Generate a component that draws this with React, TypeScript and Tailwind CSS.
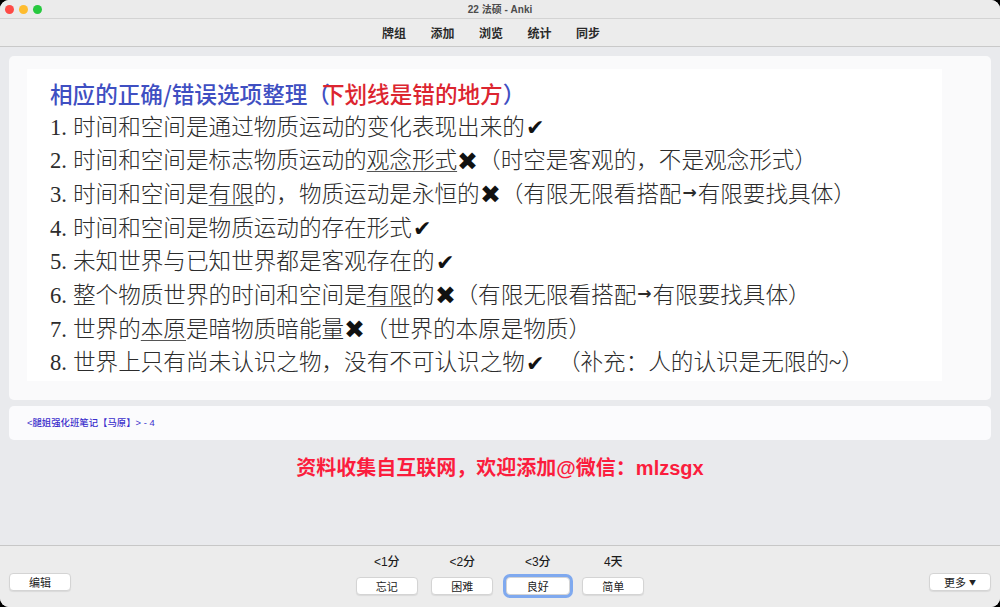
import React from "react";

const CJK = '"Noto Sans CJK SC", "Noto Sans", sans-serif';
const LAT_CJK = '"Liberation Sans", "Noto Sans CJK SC", sans-serif';
const BODY = '"Liberation Serif", "Noto Sans CJK SC", serif';

const Check = () => (
  <span className="text-[#111] text-[22px] ml-[1px]" style={{ fontFamily: '"DejaVu Sans", sans-serif' }}>
    ✔
  </span>
);
const Cross = () => (
  <span className="text-[#111] text-[25px] leading-none" style={{ fontFamily: '"DejaVu Sans", sans-serif' }}>
    ✖
  </span>
);
const Arrow = () => (
  <span
    className="inline-block text-[17px] font-bold leading-none -translate-y-[2px] mx-[1px]"
    style={{ fontFamily: '"DejaVu Sans", sans-serif' }}
  >
    →
  </span>
);
const U = ({ children }: { children: React.ReactNode }) => (
  <span className="underline decoration-[#555] decoration-1 underline-offset-[3px]">{children}</span>
);

function Line({ n, children }: { n: number; children: React.ReactNode }) {
  return (
    <div className="flex items-center h-[33.7px] whitespace-nowrap">
      <span className="w-[23px] shrink-0" style={{ fontFamily: '"Liberation Serif", serif' }}>
        {n}.
      </span>
      <span className="flex items-center">{children}</span>
    </div>
  );
}

function Btn({ children, w = "w-[62px]", focused = false }: { children: React.ReactNode; w?: string; focused?: boolean }) {
  return (
    <div
      className={`${w} h-[18px] rounded-[4px] bg-white flex items-center justify-center text-[11px] text-[#222] border border-[#d4d4d4] shadow-[0_1px_1px_rgba(0,0,0,0.08)] ${
        focused ? "ring-[3px] ring-[#7fa9ef] border-[#9dbbf0]" : ""
      }`}
      style={{ fontFamily: CJK }}
    >
      {children}
    </div>
  );
}

export default function App() {
  return (
    <div className="w-[1000px] h-[607px] bg-black">
      <div className="w-full h-full rounded-[9px] overflow-hidden flex flex-col bg-[#ececec]">
        {/* title bar */}
        <div className="relative h-[19px] shrink-0 border-b border-[#d3d3d3] bg-[#ebebeb] flex items-center justify-center">
          <div className="absolute left-[5px] top-[5px] flex gap-[5px]">
            <div className="w-[9px] h-[9px] rounded-full bg-[#fe4a46]" />
            <div className="w-[9px] h-[9px] rounded-full bg-[#febc2f]" />
            <div className="w-[9px] h-[9px] rounded-full bg-[#27c93f]" />
          </div>
          <span className="text-[10px] font-semibold text-[#4c4c4c]" style={{ fontFamily: LAT_CJK }}>
            22 法硕 - Anki
          </span>
        </div>
        {/* toolbar */}
        <div className="h-[28px] shrink-0 border-b border-[#c9c9c9] bg-[#ececec] flex items-center justify-center pr-[18px] gap-[24.5px]">
          {["牌组", "添加", "浏览", "统计", "同步"].map((t) => (
            <span key={t} className="text-[12px] font-semibold text-[#2a2a2a]" style={{ fontFamily: CJK }}>
              {t}
            </span>
          ))}
        </div>
        {/* main */}
        <div className="flex-1 bg-[#e9eaed] px-[9px] pt-[9px] flex flex-col">
          <div className="h-[344px] rounded-[5px] bg-[#fafafb] pl-[18px] pt-[13px]">
            <div
              className="w-[915px] h-[312px] bg-white pl-[23px] pt-[8px] text-[22.6px] font-light text-[#2c2c2c]"
              style={{ fontFamily: BODY }}
            >
              <div className="flex items-center h-[33.7px] whitespace-nowrap font-medium" style={{ fontFamily: CJK }}>
                <span className="text-[#3f4fc2]">相应的正确/错误选项整理（</span>
                <span className="text-[#dc2530] -ml-[8px]">下划线是错的地方</span>
                <span className="text-[#3f4fc2]">）</span>
              </div>
              <Line n={1}>
                时间和空间是通过物质运动的变化表现出来的<Check />
              </Line>
              <Line n={2}>
                时间和空间是标志物质运动的<U>观念形式</U>
                <Cross />（时空是客观的，不是观念形式）
              </Line>
              <Line n={3}>
                时间和空间是<U>有限</U>的，物质运动是永恒的<Cross />（有限无限看搭配<Arrow />有限要找具体）
              </Line>
              <Line n={4}>
                时间和空间是物质运动的存在形式<Check />
              </Line>
              <Line n={5}>
                未知世界与已知世界都是客观存在的<Check />
              </Line>
              <Line n={6}>
                整个物质世界的时间和空间是<U>有限</U>的<Cross />（有限无限看搭配<Arrow />有限要找具体）
              </Line>
              <Line n={7}>
                世界的<U>本原</U>是暗物质暗能量<Cross />（世界的本原是物质）
              </Line>
              <Line n={8}>
                世界上只有尚未认识之物，没有不可认识之物<Check />
                <span className="ml-[14px]">（补充：人的认识是无限的~）</span>
              </Line>
            </div>
          </div>
          <div className="mt-[6px] h-[34px] rounded-[5px] bg-[#fbfbfd] flex items-center pl-[18px]">
            <span className="text-[9.4px] font-medium text-[#3c30cc]" style={{ fontFamily: LAT_CJK }}>
              &lt;腿姐强化班笔记【马原】&gt; - 4
            </span>
          </div>
          <div
            className="mt-[16px] h-[24px] flex items-center justify-center text-[20px] font-bold text-[#fb1d3d]"
            style={{ fontFamily: LAT_CJK }}
          >
            资料收集自互联网，欢迎添加@微信：mlzsgx
          </div>
        </div>
        {/* bottom bar */}
        <div className="h-[62px] shrink-0 border-t border-[#c7c7c7] bg-[#ececec] flex items-start px-[9px] relative">
          <div className="mt-[27px]">
            <Btn>编辑</Btn>
          </div>
          <div className="flex-1 flex justify-center gap-[13.5px] pt-[8px]">
            {[
              ["<1分", "忘记"],
              ["<2分", "困难"],
              ["<3分", "良好"],
              ["4天", "简单"],
            ].map(([l, b]) => (
              <div key={b} className="flex flex-col items-center w-[62px]">
                <span className="text-[12px] font-medium text-[#1a1a1a] h-[17px] leading-[17px]" style={{ fontFamily: LAT_CJK }}>
                  {l}
                </span>
                <div className="mt-[6px]">
                  <Btn focused={b === "良好"} w={b === "良好" ? "w-[64px]" : "w-[62px]"}>
                    {b}
                  </Btn>
                </div>
              </div>
            ))}
          </div>
          <div className="mt-[27px]">
            <Btn>
              更多 <span className="ml-[3px] text-[7px]">▼</span>
            </Btn>
          </div>
        </div>
      </div>
    </div>
  );
}
